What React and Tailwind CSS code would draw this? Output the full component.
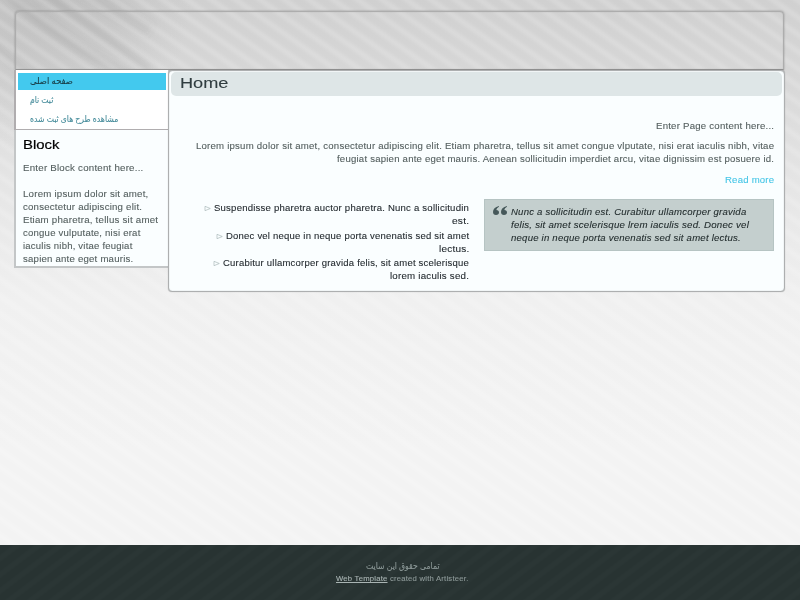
import { useLayoutEffect, useRef, useState } from 'react';

// One line of text, widened to the given number of pixels.
function Line({ w, right = false, className = '', dir, children }) {
  const ref = useRef(null);
  const [k, setK] = useState(1);
  useLayoutEffect(() => {
    setK(w / ref.current.offsetWidth);
  }, [w]);
  return (
    <div className={`flex ${right ? 'justify-end' : 'justify-start'} ${className}`}>
      <span
        ref={ref}
        dir={dir}
        className={`inline-block whitespace-nowrap ${right ? 'origin-right' : 'origin-left'}`}
        style={{ transform: `scaleX(${k})` }}
      >
        {children}
      </span>
    </div>
  );
}

function Bullet() {
  return (
    <svg className="mt-[4px] h-[5px] w-[7px] shrink-0" viewBox="0 0 7 5" fill="none" stroke="#a9b9b9" strokeWidth="0.7">
      <path d="M1 .3v4.400L6.300 2.500z" />
    </svg>
  );
}

function Item({ lines, gap }) {
  return (
    <li>
      <div className="flex justify-between">
        <div className={gap}><Bullet /></div>
        <Line right w={lines[0][1]}>{lines[0][0]}</Line>
      </div>
      <Line right w={lines[1][1]}>{lines[1][0]}</Line>
    </li>
  );
}

const block = [
  ['Lorem ipsum dolor sit amet,', 125],
  ['consectetur adipiscing elit.', 119],
  ['Etiam pharetra, tellus sit amet', 135],
  ['congue vulputate, nisi erat', 117],
  ['iaculis nibh, vitae feugiat', 109],
  ['sapien ante eget mauris.', 110],
];

const quote = [
  ['Nunc a sollicitudin est. Curabitur ullamcorper gravida', 235],
  ['felis, sit amet scelerisque lrem iaculis sed. Donec vel', 238],
  ['neque in neque porta venenatis sed sit amet lectus.', 230],
];

export default function App() {
  return (
    <div className="relative isolate flex h-[600px] w-[800px] flex-col overflow-hidden bg-[#f3f3f3] font-['Liberation_Sans','DejaVu_Sans',sans-serif] text-[9px] leading-[13px] tracking-[0.2px] text-[#535e5e] [-webkit-text-stroke:0.1px_currentColor]">
      <svg className="absolute inset-0 -z-10" width="800" height="600">
        <defs>
          <linearGradient id="fade" x1="0" y1="0" x2="0" y2="1">
            <stop offset="0" stopColor="#d0d0d0" />
            <stop offset=".14" stopColor="#d8d8d8" />
            <stop offset=".3" stopColor="#e5e5e5" />
            <stop offset=".5" stopColor="#f0f0f0" />
            <stop offset=".75" stopColor="#f3f3f3" />
          </linearGradient>
          <radialGradient id="shade" cx="0" cy="0" r="1" gradientUnits="userSpaceOnUse" gradientTransform="matrix(150 0 0 150 40 5)">
            <stop offset="0" stopColor="#777" stopOpacity=".2" />
            <stop offset=".5" stopColor="#888" stopOpacity=".14" />
            <stop offset="1" stopColor="#999" stopOpacity="0" />
          </radialGradient>
          <pattern id="light" width="20" height="14" patternUnits="userSpaceOnUse" patternTransform="rotate(35)">
            <path d="M0 4.500h20" stroke="#fff" strokeWidth="8" opacity=".06" />
            <path d="M0 4.500h20" stroke="#fff" strokeWidth="5" opacity=".06" />
            <path d="M0 4.500h20" stroke="#fff" strokeWidth="2" opacity=".05" />
          </pattern>
          <pattern id="dark" width="20" height="13" patternUnits="userSpaceOnUse" patternTransform="rotate(-37)">
            <path d="M0 4h20" stroke="#35443f" strokeWidth="5" opacity=".16" />
          </pattern>
          <filter id="soft" x="-20%" y="-20%" width="140%" height="140%"><feGaussianBlur stdDeviation="3" /></filter>
        </defs>
        <rect width="800" height="600" fill="url(#fade)" />
        <rect width="300" height="300" fill="url(#shade)" />
        <g filter="url(#soft)" stroke="#777" fill="none">
          <path d="M5 -10Q60 45 140 80" strokeWidth="9" opacity=".15" />
          <path d="M40 -10Q90 25 150 70" strokeWidth="9" opacity=".12" />
          <path d="M80 -10L150 30" strokeWidth="14" opacity=".08" />
          <path d="M-10 40L110 150" strokeWidth="7" opacity=".1" />
        </g>
        <rect width="800" height="600" fill="url(#light)" />
        <rect y="545" width="800" height="55" fill="#283332" />
        <rect y="545" width="800" height="55" fill="url(#dark)" />
      </svg>

      <header className="mx-[15px] mt-[11px] h-[59px] w-[769px] rounded-t-[4px] border border-[#adadad] border-b-[#939393] shadow-[0_0_2px_rgba(0,0,0,0.35),inset_0_0_1px_rgba(0,0,0,0.2)]" />

      <div className="ml-[14px] flex h-[475px] w-[771px] items-start">
        <aside className="w-[154px]">
          <nav className="h-[60px] border-b border-l-2 border-[#b0adaf] bg-white pt-[2.5px] pr-[3px] pl-[2px] text-[#458b9a] tracking-normal">
            <div className="h-[17.5px] w-[148px] bg-[#43c9ee] pt-[2px] pl-[12px] text-[#173840]"><Line dir="rtl" w={43}>صفحه اصلی</Line></div>
            <div className="pt-[4px] pl-[12px]"><Line dir="rtl" w={23}>ثبت نام</Line></div>
            <div className="pt-[6px] pl-[12px]"><Line dir="rtl" w={88}>مشاهده طرح های ثبت شده</Line></div>
          </nav>
          <section className="h-[138px] border-b-2 border-l-2 border-[#c3c6c7] bg-[#fafeff] pl-[7px]">
            <h2 className="pt-[8px] text-[12px] leading-[15px] tracking-normal text-black [-webkit-text-stroke:0.2px_currentColor]"><Line w={36}>Block</Line></h2>
            <div className="pt-[9px]"><Line w={120}>Enter Block content here...</Line></div>
            <div className="pt-[12.5px]">
              {block.map(([t, w]) => <Line key={t} w={w}>{t}</Line>)}
            </div>
          </section>
        </aside>

        <main className="h-[222px] w-[617px] rounded-[4px] border border-[#adafb0] bg-[#fafeff] px-[2px] pt-px shadow-[inset_0_0_1px_rgba(0,0,0,0.35),0_0_1px_rgba(0,0,0,0.3)]">
          <h1 className="h-[24px] rounded-[5px] bg-[#dee6e7] pl-[9px] text-[14px] leading-[22px] tracking-normal text-[#303d40]"><Line w={48}>Home</Line></h1>
          <div className="pr-[8px] pl-[7px]">
            <div className="pt-[24px]"><Line right w={118}>Enter Page content here...</Line></div>
            <div className="pt-[7px]">
              <Line right w={578}>Lorem ipsum dolor sit amet, consectetur adipiscing elit. Etiam pharetra, tellus sit amet congue vlputate, nisi erat iaculis nibh, vitae</Line>
              <Line right w={437}>feugiat sapien ante eget mauris. Aenean sollicitudin imperdiet arcu, vitae dignissim est posuere id.</Line>
            </div>
            <div className="pt-[8px] text-[#45c5e6]"><Line right w={49}>Read more</Line></div>
            <div className="flex justify-end gap-[15px] pt-[12px]">
              <ul className="flex w-[266px] flex-col gap-[1.5px] pt-[3px] text-[#242b30]">
                <Item gap="pl-[1px]" lines={[['Suspendisse pharetra auctor pharetra. Nunc a sollicitudin', 255], ['est.', 17]]} />
                <Item gap="pl-[13px]" lines={[['Donec vel neque in neque porta venenatis sed sit amet', 243], ['lectus.', 30]]} />
                <Item gap="pl-[10px]" lines={[['Curabitur ullamcorper gravida felis, sit amet scelerisque', 246], ['lorem iaculis sed.', 79]]} />
              </ul>
              <blockquote className="flex h-[52px] w-[290px] border border-[#b6c4c3] bg-[#c4cfce] pt-[6px] pl-[8px] text-[#1e2829] italic">
                <svg className="mr-[4px] h-[9px] w-[14px] shrink-0" viewBox="0 0 14 9" fill="#46585a">
                  <path d="M6 0 Q0 1.500 0 6 Q0 9 3 9 Q6 9 6 6.300 Q6 4 3.300 3.900 Q3.500 2 6 0.800 Z" />
                  <path d="M14 0 Q8 1.500 8 6 Q8 9 11 9 Q14 9 14 6.300 Q14 4 11.300 3.900 Q11.500 2 14 0.800 Z" />
                </svg>
                <div>{quote.map(([t, w]) => <Line key={t} w={w}>{t}</Line>)}</div>
              </blockquote>
            </div>
          </div>
        </main>
      </div>

      <footer className="flex h-[55px] flex-col items-center pt-[15px] pl-[5px] text-[#8d9998]">
        <div className="w-[74px] tracking-normal"><Line dir="rtl" w={74}>تمامی حقوق این سایت</Line></div>
        <div className="w-[133px] text-[7px] leading-[12px]">
          <Line w={133}><a className="text-[#a9b4b3] underline">Web Template</a> created with Artisteer.</Line>
        </div>
      </footer>
    </div>
  );
}
